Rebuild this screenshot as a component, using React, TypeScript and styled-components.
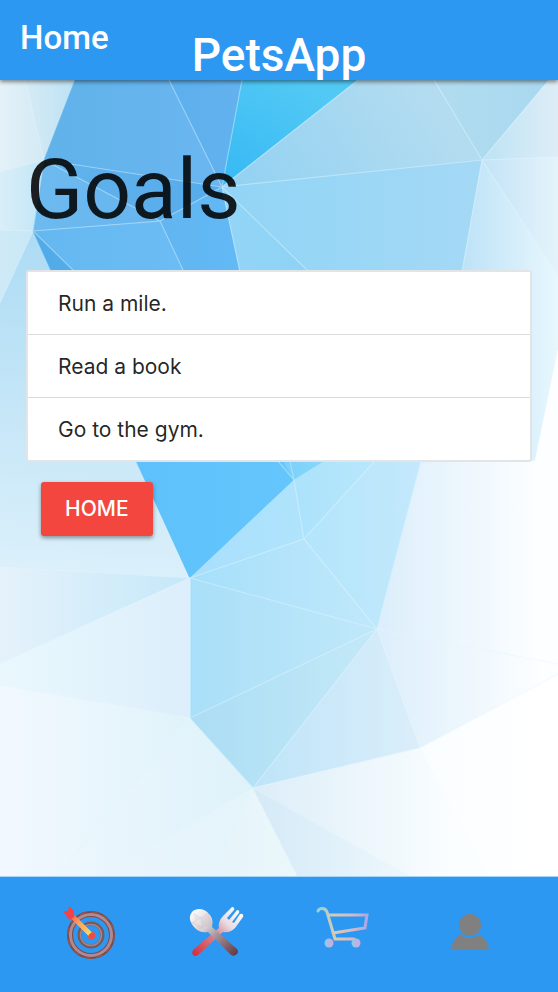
import React from "react";
import styled, { createGlobalStyle } from "styled-components";

const GlobalStyle = createGlobalStyle`
  * { box-sizing: border-box; }
  body {
    margin: 0;
    font-family: Inter, "Liberation Sans", sans-serif;
    color: rgba(0, 0, 0, 0.87);
  }
`;

const Page = styled.div`
  display: flex;
  flex-direction: column;
  min-height: 100vh;
`;

const NavBar = styled.nav`
  position: relative;
  z-index: 1;
  display: grid;
  grid-template-columns: 1fr auto 1fr;
  height: 80px;
  padding: 0 20px;
  background: #2d98f1;
  box-shadow: 0 2px 4px rgba(0, 0, 0, 0.45);
  font-family: Roboto, "Liberation Sans", sans-serif;
  font-weight: 500;
  white-space: nowrap;
`;

const NavLink = styled.a`
  color: #fff;
  font-size: 33px;
  line-height: 76px;
  text-decoration: none;
`;

const Brand = styled.a`
  color: #fff;
  font-size: 46px;
  line-height: 110px;
  text-decoration: none;
`;

const Main = styled.main`
  position: relative;
  flex: 1;
  padding: 62px 26px 40px;
  overflow: hidden;
`;

const Backdrop = styled.svg`
  position: absolute;
  inset: 0;
  width: 100%;
  height: 100%;
`;

const Content = styled.div`
  position: relative;
`;

const Title = styled.h1`
  margin: 0 0 32px;
  font-family: Roboto, "Liberation Sans", sans-serif;
  font-size: 84px;
  line-height: 96px;
  font-weight: 400;
`;

const GoalList = styled.ul`
  margin: 0;
  padding: 0;
  list-style: none;
  background: #fff;
  border: 2px solid #e2e4e5;
  border-radius: 3px;
`;

const GoalItem = styled.li`
  padding: 17px 30px 15px;
  font-size: 21px;
  line-height: 30px;

  & + & {
    border-top: 1px solid #dcdcdc;
  }
`;

const HomeButton = styled.button`
  display: block;
  margin: 20px 15px 0;
  padding: 0 24px;
  border: 0;
  border-radius: 3px;
  background: #f3463f;
  box-shadow: 0 2px 4px rgba(0, 0, 0, 0.4);
  color: #fff;
  font-family: inherit;
  font-size: 21px;
  font-weight: 500;
  line-height: 54px;
  text-transform: uppercase;
`;

const TabBar = styled.footer`
  display: grid;
  grid-template-columns: repeat(4, 1fr);
  height: 115px;
  padding: 26px 27px 0;
  background: #2d98f1;
`;

const Tab = styled.a`
  display: flex;
  justify-content: center;
`;

type Facet = [
  points: string,
  x1: number,
  x2: number,
  from: string,
  to: string,
  y1?: number,
  y2?: number,
];

const facets: Facet[] = [
  ["0,80 25,80 44,160 0,172", 0, 44, "#e5f1f8", "#d2eaf5"],
  ["25,80 75,80 44,160", 25, 75, "#d7ebf5", "#bce2f4"],
  ["0,172 44,160 33,231 0,230", 0, 44, "#d9eef8", "#c1e6f6"],
  ["0,230 33,231 0,303", 0, 33, "#cfeaf6", "#c7e7f6"],
  ["0,303 33,231 190,578 0,567", 50, 20, "#acdbf4", "#def1fb", 231, 590],
  ["75,80 169,80 222,187 44,160", 44, 222, "#60b2e9", "#6ab6f1"],
  ["169,80 242,80 222,187", 169, 242, "#5dafed", "#63b2ef"],
  ["44,160 222,187 160,221", 44, 222, "#62b3ed", "#56abea"],
  ["44,160 160,221 33,231", 33, 160, "#6dbaf0", "#67b5ef"],
  ["33,231 160,221 184,272 75,272", 33, 184, "#64b8f0", "#6cbcf5"],
  ["160,221 222,187 240,272 184,272", 160, 240, "#62b5f0", "#61b9f6"],
  ["33,231 190,578 294,480 240,272 75,272", 50, 290, "#51abe8", "#62c5fa"],
  ["136,461 283,461 294,480 190,578", 136, 294, "#5ec1fb", "#64c6fb"],
  ["242,80 358,80 222,187", 250, 300, "#3cbcf4", "#52c9f5", 170, 80],
  ["358,80 434,80 482,160 222,187", 250, 420, "#94d2f2", "#b3dcf0", 190, 80],
  ["434,80 549,80 482,160", 434, 549, "#b1dcf0", "#a9d8ef"],
  ["222,187 482,160 462,272 309,272", 222, 482, "#91d4f5", "#a4d9f5"],
  ["222,187 309,272 240,272", 222, 309, "#94d5f5", "#8dd3f6"],
  ["549,80 558,80 558,157 482,160", 482, 558, "#bce3f4", "#deedf7"],
  ["482,160 558,157 558,276", 482, 558, "#c2e3f6", "#e5f3fb"],
  ["482,160 558,276 558,350 535,461 421,461 462,272", 465, 558, "#bee3f7", "#e8f7fd"],
  ["558,350 558,664 377,629 421,461 535,461", 377, 535, "#dbeefb", "#fcfeff"],
  ["283,461 325,461 294,480", 283, 325, "#7acff9", "#89d8fb"],
  ["325,461 375,461 304,539 294,480", 294, 375, "#abe2fc", "#b8e7fb"],
  ["294,480 304,539 190,578", 190, 304, "#a8dffc", "#b0e4fc"],
  ["375,461 421,461 377,629 304,539", 304, 421, "#b2e5fb", "#c4e8fc"],
  ["190,578 304,539 377,629", 190, 377, "#a6dffb", "#c0e8fa"],
  ["190,578 377,629 190,718", 190, 377, "#a9dff8", "#c0e8fa"],
  ["0,567 190,578 0,664", 0, 190, "#e5f2fb", "#c5e8f9"],
  ["0,664 190,578 190,718 0,685", 0, 190, "#e9f8fd", "#dceefb"],
  ["0,685 190,718 60,877 0,877", 0, 190, "#f2f8ff", "#e0f3fa"],
  ["190,718 253,788 100,877 60,877", 60, 253, "#edf6fd", "#def2fa"],
  ["253,788 213,877 100,877", 100, 253, "#e9f5fc", "#e4f4fa"],
  ["253,788 298,877 213,877", 213, 298, "#e5f4fa", "#ebf7fa"],
  ["190,718 377,629 253,788", 190, 377, "#abddf4", "#c4e9f8"],
  ["377,629 420,748 253,788", 253, 420, "#bee4f8", "#dbeefa"],
  ["377,629 558,664 558,674 420,748", 377, 540, "#dceefb", "#fcfeff"],
  ["253,788 420,748 500,877 410,877", 253, 460, "#dcedf8", "#fbfeff"],
  ["253,788 410,877 298,877", 253, 410, "#d4e9f7", "#edf8fc"],
  ["420,748 558,674 558,877 490,877", 420, 558, "#fafdff", "#ffffff"],
];

const seams =
  "M25 80L44 160L0 172M44 160L33 231L0 230M33 231L0 303M169 80L222 187L44 160L160 221L33 231L75 272M160 221L222 187M160 221L184 272M242 80L222 187L358 80M434 80L482 160L222 187L309 272M222 187L240 272M549 80L482 160L558 157M482 160L558 276M482 160L462 272M278 461L294 480L290 461M294 480L304 539L375 461M190 578L304 539L377 629L190 578L0 567M190 578V718L377 629L253 788L190 718L0 685M190 718L60 872M253 788L100 877M253 788L213 877M253 788L410 877M377 629L420 748L253 788M377 629L558 664M420 748L558 674M421 461L377 629M0 664L190 578";

function PolygonBackdrop() {
  return (
    <Backdrop viewBox="0 80 558 797" preserveAspectRatio="xMidYMid slice" aria-hidden="true">
      <defs>
        {facets.map(([, x1, x2, from, to, y1 = 0, y2 = 0], i) => (
          <linearGradient key={i} id={`facet${i}`} gradientUnits="userSpaceOnUse" x1={x1} x2={x2} y1={y1} y2={y2}>
            <stop stopColor={from} />
            <stop offset="1" stopColor={to} />
          </linearGradient>
        ))}
      </defs>
      <rect y="80" width="558" height="797" fill="#dff2fc" />
      {facets.map(([points], i) => (
        <polygon key={i} points={points} fill={`url(#facet${i})`} stroke={`url(#facet${i})`} strokeWidth="0.5" />
      ))}
      <path d={seams} fill="none" stroke="#e4f7ff" strokeOpacity="0.4" strokeWidth="1.2" />
      <path d="M0 876.5H558" stroke="#a9d5f7" />
    </Backdrop>
  );
}

function TargetIcon() {
  return (
    <svg width="60" height="60" viewBox="0 0 60 60" aria-hidden="true">
      <defs>
        <linearGradient id="shaft" x1="9" y1="10" x2="30" y2="31" gradientUnits="userSpaceOnUse">
          <stop stopColor="#f64443" /><stop offset=".45" stopColor="#ffa05a" /><stop offset="1" stopColor="#ffd45d" />
        </linearGradient>
      </defs>
      <g fill="none">
        <circle cx="31" cy="32" r="21" stroke="#7d4a4c" strokeWidth="6" />
        <circle cx="31" cy="32" r="20.5" stroke="#b08a93" strokeWidth="3" />
        <circle cx="31" cy="32" r="23" stroke="#93564f" strokeWidth="1.5" strokeDasharray="7 5" />
        <circle cx="31" cy="32" r="11.5" stroke="#765a5c" strokeWidth="4" />
        <circle cx="31" cy="32" r="10.5" stroke="#a9848a" strokeWidth="1.5" />
      </g>
      <circle cx="31" cy="32" r="4" fill="#f05045" />
      <path d="M10 11L30 31" stroke="url(#shaft)" strokeWidth="5" />
      <circle cx="32" cy="33" r="3" fill="#ec4d48" />
      <path d="M3 8L8 8L9 3L14 8L14 14L10 17L7 14Z" fill="#f64245" />
    </svg>
  );
}

function CutleryIcon() {
  return (
    <svg width="60" height="60" viewBox="0 0 60 60" aria-hidden="true">
      <defs>
        <linearGradient id="fork" x1="53" y1="4" x2="6" y2="52" gradientUnits="userSpaceOnUse">
          <stop stopColor="#fff" /><stop offset=".3" stopColor="#e9dce3" /><stop offset=".5" stopColor="#d99098" /><stop offset="1" stopColor="#d92735" />
        </linearGradient>
        <linearGradient id="spoon" x1="6" y1="7" x2="50" y2="52" gradientUnits="userSpaceOnUse">
          <stop stopColor="#fff" /><stop offset=".35" stopColor="#d7cfd2" /><stop offset=".58" stopColor="#a18e98" /><stop offset="1" stopColor="#68383f" />
        </linearGradient>
      </defs>
      <path d="M33 25C32 20 34 16 38 12L46 4Q49 4 48 7L41 15L43 17L51 7Q54 7 53 10L46 19L48 20L54 11Q58 10 57 14L49 25C45 29 41 30 37 29L12 52Q9 54 7 52Q5 49 8 46Z" fill="url(#fork)" />
      <path d="M6 9C11 4 19 6 23 11C27 15 27 20 26 24L51 46Q53 49 51 51Q48 54 45 52L22 29C17 30 13 29 9 25C4 20 2 14 6 9Z" fill="url(#spoon)" />
      <path d="M7 10L15 15L22 10L25 21L17 24L15 15L5 20L17 24L12 27" fill="#bba9b2" fillOpacity=".15" stroke="#aaa1aa" strokeOpacity=".15" />
    </svg>
  );
}

function CartIcon() {
  return (
    <svg width="60" height="60" viewBox="0 0 60 60" aria-hidden="true">
      <defs>
        <linearGradient id="cart" x1="4" x2="57" y1="0" y2="0" gradientUnits="userSpaceOnUse">
          <stop stopColor="#8fd3dc" /><stop offset=".35" stopColor="#d8cab2" /><stop offset=".7" stopColor="#d3bbc7" /><stop offset="1" stopColor="#a7a5e6" />
        </linearGradient>
        <linearGradient id="wheel">
          <stop stopColor="#87cdef" /><stop offset="1" stopColor="#dca6d6" />
        </linearGradient>
      </defs>
      <path d="M6 8C7 5 13 4 15 9L23 36H42M17 12H55L53 25L21 30" fill="none" stroke="url(#cart)" strokeWidth="3" strokeLinecap="round" />
      <circle cx="17" cy="40" r="4.5" fill="url(#wheel)" />
      <circle cx="44" cy="40" r="4.5" fill="url(#wheel)" />
    </svg>
  );
}

function UserIcon() {
  return (
    <svg width="60" height="60" viewBox="0 0 60 60" aria-hidden="true">
      <path d="M13 47C14 39 18 34 23 31H41C46 34 50 39 51 47Z" fill="#808080" />
      <circle cx="32" cy="22" r="13" fill="#2d98f1" />
      <circle cx="32" cy="22" r="11" fill="#808080" />
    </svg>
  );
}

const goals = ["Run a mile.", "Read a book", "Go to the gym."];

const tabs = [
  { label: "Goals", Icon: TargetIcon },
  { label: "Food", Icon: CutleryIcon },
  { label: "Shop", Icon: CartIcon },
  { label: "Profile", Icon: UserIcon },
];

export default function App() {
  return (
    <Page>
      <GlobalStyle />
      <NavBar>
        <NavLink href="#home">Home</NavLink>
        <Brand href="#top">PetsApp</Brand>
      </NavBar>
      <Main>
        <PolygonBackdrop />
        <Content>
          <Title>Goals</Title>
          <GoalList>
            {goals.map((goal) => (
              <GoalItem key={goal}>{goal}</GoalItem>
            ))}
          </GoalList>
          <HomeButton type="button">Home</HomeButton>
        </Content>
      </Main>
      <TabBar>
        {tabs.map(({ label, Icon }) => (
          <Tab key={label} href={`#${label.toLowerCase()}`} aria-label={label}>
            <Icon />
          </Tab>
        ))}
      </TabBar>
    </Page>
  );
}
